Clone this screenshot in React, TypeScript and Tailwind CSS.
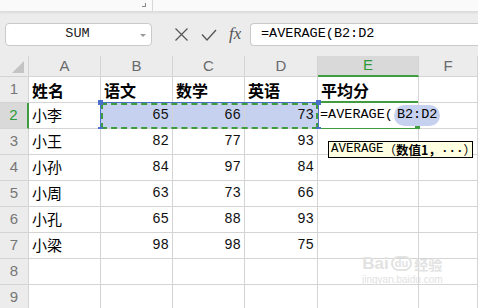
import React from 'react';

const cols = [
  { key: 'A', w: 'w-[72px]' },
  { key: 'B', w: 'w-[72px]' },
  { key: 'C', w: 'w-[72px]' },
  { key: 'D', w: 'w-[73px]' },
  { key: 'E', w: 'w-[101px]' },
  { key: 'F', w: 'w-[59px]' },
];

const rows: (string | number)[][] = [
  ['姓名', '语文', '数学', '英语', '平均分', ''],
  ['小李', 65, 66, 73, '', ''],
  ['小王', 82, 77, 93, '', ''],
  ['小孙', 84, 97, 84, '', ''],
  ['小周', 63, 73, 66, '', ''],
  ['小孔', 65, 88, 93, '', ''],
  ['小梁', 98, 98, 75, '', ''],
  ['', '', '', '', '', ''],
  ['', '', '', '', '', ''],
];

const cjk = "font-['SimSun','Noto_Sans_CJK_SC',sans-serif]";
const mono = "font-['Liberation_Mono','Noto_Sans_CJK_SC',monospace]";

function Cell({ r, c, v }: { r: number; c: number; v: string | number }) {
  const isNum = typeof v === 'number';
  const sel = r === 1 && c >= 1 && c <= 3;
  const active = r === 1 && c === 4;
  return (
    <div
      className={`${cols[c].w} h-[26px] shrink-0 border-r border-b border-[#d4d4d4] flex items-center ${
        isNum ? 'justify-end pr-[3px]' : 'pl-[3px]'
      } ${sel ? 'bg-[#c6d1ef]' : 'bg-white'} ${active ? 'relative overflow-visible' : ''}`}
    >
      {isNum ? (
        <span className={`${mono} text-[14px] text-[#111]`}>{v}</span>
      ) : (
        <span className={`${cjk} ${r === 0 ? 'font-bold text-[16px]' : 'text-[15px]'} text-black`}>{v}</span>
      )}
      {active && (
        <>
          <div className="absolute left-0 right-0 top-[-2px] h-[2px] bg-[#3f9d3f]" />
          <div className="absolute left-0 right-[3px] bottom-[-2px] h-[2px] bg-[#3f9d3f]" />
          <div className="absolute right-[-2px] bottom-[-3px] w-[5px] h-[5px] bg-[#3f9d3f]" />
          <div className="absolute left-[2px] top-0 h-full flex items-center whitespace-nowrap z-10">
            <span className={`${mono} text-[13.5px] text-black`}>=AVERAGE(</span>
            <span className={`${mono} text-[13.5px] text-black bg-[#c6d1ef] rounded-full px-[3px] ml-[1px]`}>B2:D2</span>
          </div>
        </>
      )}
    </div>
  );
}

export default function App() {
  return (
    <div className="w-[478px] h-[308px] overflow-hidden bg-[#ececec] relative select-none">
      {/* top strip */}
      <div className="h-[12px] bg-[#fafafa] border-b border-[#dcdcdc] shadow-[0_1px_2px_rgba(0,0,0,0.08)] flex">
        <div className="w-[153px] relative border-r border-[#d8d8d8]">
          <div className="absolute right-[6px] top-[3px] w-[4px] h-[4px] border-r border-b border-[#888]" />
        </div>
      </div>

      {/* formula bar */}
      <div className="h-[44px] flex items-center pt-[1px]">
        <div className="ml-[5px] w-[147px] h-[23px] bg-white border border-[#cacaca] rounded-[4px] flex items-center relative">
          <span className={`${mono} text-[13.5px] text-[#222] w-full text-center pr-[2px]`}>SUM</span>
          <div className="absolute right-[5px] top-[10px] w-0 h-0 border-l-[3px] border-r-[3px] border-t-[3px] border-l-transparent border-r-transparent border-t-[#999]" />
        </div>
        <div className="w-[98px] flex items-center pl-[22px] gap-[12px] text-[#555]">
          <svg width="15" height="15" viewBox="0 0 15 15" fill="none" stroke="#555" strokeWidth="1.2">
            <path d="M1.5 1.5 L13.5 13.5 M13.5 1.5 L1.5 13.5" />
          </svg>
          <svg width="16" height="14" viewBox="0 0 16 14" fill="none" stroke="#555" strokeWidth="1.3">
            <path d="M1 6.5 L6 12 L15 2" />
          </svg>
          <span className="font-['Liberation_Serif',serif] italic text-[17px] leading-none text-[#555] -mt-[2px]">fx</span>
        </div>
        <div className="flex-1 h-[23px] bg-white border border-[#cacaca] border-r-0 rounded-l-[4px] flex items-center pl-[10px]">
          <span className={`${mono} text-[13.5px] text-black`}>=AVERAGE(B2:D2</span>
        </div>
      </div>

      {/* sheet */}
      <div className="bg-white">
        {/* column header */}
        <div className="flex h-[21px] bg-[#ececec]">
          <div className="w-[29px] shrink-0 border-r border-b border-[#d4d4d4] relative">
            <svg className="absolute right-[4px] bottom-[3px]" width="12" height="12" viewBox="0 0 12 12">
              <path d="M12 0 L12 12 L0 12 Z" fill="#c4c4c4" />
            </svg>
          </div>
          {cols.map((c) => (
            <div
              key={c.key}
              className={`${c.w} shrink-0 border-r flex items-center justify-center ${
                c.key === 'E'
                  ? 'bg-[#d9d9d9] border-b-2 border-b-[#3f9d3f] border-r-[#d4d4d4] text-[#2f9a3a]'
                  : 'border-b border-[#d4d4d4] text-[#6a6a6a]'
              } font-['Liberation_Sans',sans-serif] text-[15px]`}
            >
              {c.key}
            </div>
          ))}
        </div>

        {rows.map((row, r) => (
          <div key={r} className="flex relative">
            <div
              className={`w-[29px] h-[26px] shrink-0 border-b flex items-center justify-center font-['Liberation_Sans',sans-serif] text-[15px] ${
                r === 1
                  ? 'bg-[#d9d9d9] border-r-2 border-r-[#3f9d3f] border-b-[#d4d4d4] text-[#2f9a3a]'
                  : 'bg-[#ececec] border-r border-[#d4d4d4] text-[#777]'
              }`}
            >
              {r + 1}
            </div>
            {row.map((v, c) => (
              <Cell key={c} r={r} c={c} v={v} />
            ))}
            {r === 1 && (
              <div className="absolute left-[100px] top-[-1px] w-[219px] h-[28px] border border-[#4a6fc9] pointer-events-none">
                <div className="absolute inset-0 border-2 border-dashed border-[#3f9d3f]" />
                <div className="absolute left-[-3px] top-[-3px] w-[5px] h-[5px] bg-[#4a6fc9]" />
                <div className="absolute right-[-3px] top-[-3px] w-[5px] h-[5px] bg-[#4a6fc9]" />
                <div className="absolute left-[-3px] bottom-[-3px] w-[5px] h-[5px] bg-[#4a6fc9]" />
                <div className="absolute right-[-3px] bottom-[-3px] w-[5px] h-[5px] bg-[#4a6fc9]" />
              </div>
            )}
            {r === 2 && (
              <div className="absolute left-[328px] top-[12px] z-20 w-[145px] h-[17px] pl-[2px] bg-[#ffffe1] border border-black flex items-center whitespace-nowrap text-[12.5px] leading-[15px] text-black">
                <span className={mono}>AVERAGE</span>
                <span className={cjk}>（</span>
                <span className={`${cjk} font-bold`}>数值1，</span>
                <span className={`${mono} font-bold`}>...</span>
                <span className={cjk}>）</span>
              </div>
            )}
          </div>
        ))}
      </div>

      {/* watermark */}
      <div className="absolute left-[362px] top-[255px] flex flex-col items-center text-[#e2e2e2] pointer-events-none">
        <div className="flex items-center gap-[2px] font-['Liberation_Sans',sans-serif] font-bold text-[17px] leading-none">
          <span>Bai</span>
          <span className="rounded-full border-2 border-[#e2e2e2] px-[2px] text-[11px]">du</span>
          <span className={`${cjk} text-[14px]`}>经验</span>
        </div>
        <span className="font-['Liberation_Sans',sans-serif] text-[10px] leading-none mt-[3px]">jingyan.baidu.com</span>
      </div>
    </div>
  );
}
